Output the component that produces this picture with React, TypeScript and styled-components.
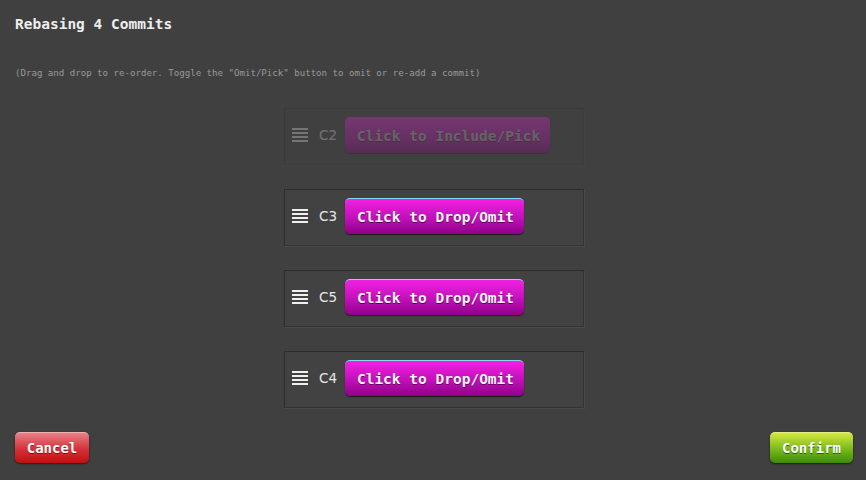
import { FC } from 'react'
import styled, { createGlobalStyle, css } from 'styled-components'

const GlobalStyle = createGlobalStyle`
  html, body {
    margin: 0;
    padding: 0;
    background: #404040;
  }
  body {
    font-family: "DejaVu Sans Mono", "Liberation Mono", monospace;
    color: #eeeeee;
  }
`

const Page = styled.div`
  width: 866px;
  height: 480px;
  box-sizing: border-box;
  padding: 15px 13px 17px 15px;
  display: flex;
  flex-direction: column;
  background: #404040;
`

const Title = styled.div`
  font-size: 14.5px;
  font-weight: bold;
  line-height: 18px;
  color: #eeeeee;
`

const Hint = styled.div`
  margin-top: 34px;
  font-size: 9.1px;
  line-height: 12px;
  color: #9a9a9a;
`

const List = styled.div`
  margin-top: 29px;
  display: flex;
  flex-direction: column;
  align-items: center;
  gap: 24px;
  flex: 1;
`

const Row = styled.div<{ $omitted?: boolean }>`
  width: 300px;
  height: 57px;
  box-sizing: border-box;
  border: 1px solid #2c2c2c;
  border-right-color: #333;
  border-bottom-color: #333;
  box-shadow: 1px 1px 0 #4a4a4a;
  background: #424242;
  display: flex;
  align-items: center;
  padding: 0 0 2px 7px;
  ${p => p.$omitted && css`
    opacity: 0.3;
  `}
`

const Handle = styled.div`
  width: 16px;
  display: flex;
  flex-direction: column;
  gap: 1.7px;
  margin-top: -1px;

  span {
    display: block;
    height: 2px;
    background: #f0f0f0;
  }
`

const Label = styled.span`
  font-family: "DejaVu Sans", "Noto Sans", sans-serif;
  font-size: 13.5px;
  color: #e8e8e8;
  margin: -2px 0 0 11px;
  width: 26px;
`

const ToggleButton = styled.button<{ $omitted?: boolean }>`
  width: 179px;
  height: 36px;
  margin-top: -2px;
  border: none;
  border-top: 1px solid #88d8f0;
  border-radius: 5px;
  background: linear-gradient(#f420e4, #c010b8 55%, #900088);
  box-shadow: 0 1px 1px #1a1a1a;
  font-family: "DejaVu Sans Mono", "Liberation Mono", monospace;
  font-weight: bold;
  font-size: 14.5px;
  color: #f4f4f4;
  text-shadow: 0 1px 0 #5a0050;
  padding: 2px 0 0 2px;
  ${p => p.$omitted && css`
    border-top-color: #c040c0;
    color: #bbbbbb;
    width: 205px;
  `}
`

const Footer = styled.div`
  display: flex;
  justify-content: space-between;
  align-items: center;
`

const ActionButton = styled.button<{ $tone: 'red' | 'green' }>`
  height: 31px;
  border: none;
  border-radius: 5px;
  padding: 0 10px;
  font-family: "DejaVu Sans Mono", "Liberation Mono", monospace;
  font-weight: bold;
  font-size: 14px;
  color: #ffffff;
  box-shadow: 0 1px 2px #1c1c1c;
  ${p => p.$tone === 'red' ? css`
    width: 74px;
    background: linear-gradient(#e88088, #d43038 55%, #c01010);
    border-top: 1px solid #f0b0b0;
    text-shadow: 0 1px 0 #801010;
  ` : css`
    width: 83px;
    background: linear-gradient(#d4e840, #78b818 55%, #3c8c08);
    border-top: 1px solid #e0f080;
    text-shadow: 0 1px 0 #285808;
  `}
`

type Commit = { id: string; omitted?: boolean }

const commits: Commit[] = [
  { id: 'C2', omitted: true },
  { id: 'C3' },
  { id: 'C5' },
  { id: 'C4' },
]

const App: FC = () => {
  return (
    <>
      <GlobalStyle />
      <Page>
        <Title>Rebasing 4 Commits</Title>
        <Hint>(Drag and drop to re-order. Toggle the "Omit/Pick" button to omit or re-add a commit)</Hint>
        <List>
          {commits.map(c => (
            <Row key={c.id} $omitted={c.omitted}>
              <Handle><span /><span /><span /><span /></Handle>
              <Label>{c.id}</Label>
              <ToggleButton $omitted={c.omitted}>
                {c.omitted ? 'Click to Include/Pick' : 'Click to Drop/Omit'}
              </ToggleButton>
            </Row>
          ))}
        </List>
        <Footer>
          <ActionButton $tone="red">Cancel</ActionButton>
          <ActionButton $tone="green">Confirm</ActionButton>
        </Footer>
      </Page>
    </>
  )
}

export default App
